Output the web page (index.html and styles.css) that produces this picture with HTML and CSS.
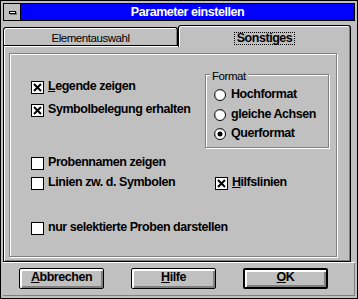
FILE: index.html
```html
<!DOCTYPE html>
<html lang="de">
<head>
<meta charset="utf-8">
<title>Parameter einstellen</title>
<link rel="stylesheet" href="styles.css">
</head>
<body>
<div class="frame">
  <div class="window">
    <div class="titlebar">
      <div class="sysmenu"><span class="sysbar"></span></div>
      <div class="caption">Parameter einstellen</div>
    </div>
    <div class="client">
      <div class="tabs">
        <div class="tab"><span>Elementauswahl</span></div>
        <div class="tab active"><span class="focus">Sonstiges</span></div>
      </div>
      <div class="tabpanel">
        <div class="pane">
          <div class="top">
            <div class="col">
              <div class="check">
                <svg class="box" width="13" height="13" viewBox="0 0 13 13"><rect x="0.5" y="0.5" width="12" height="12" fill="#fff" stroke="#000"/><path d="M3 3L10 10M10 3L3 10" stroke="#000" stroke-width="2"/></svg>
                <span class="label"><u>L</u>egende zeigen</span>
              </div>
              <div class="check">
                <svg class="box" width="13" height="13" viewBox="0 0 13 13"><rect x="0.5" y="0.5" width="12" height="12" fill="#fff" stroke="#000"/><path d="M3 3L10 10M10 3L3 10" stroke="#000" stroke-width="2"/></svg>
                <span class="label">Symbolbelegung erhalten</span>
              </div>
            </div>
            <div class="group">
              <span class="legend">Format</span>
              <div class="radio">
                <svg class="dot" width="12" height="12" viewBox="0 0 12 12"><circle cx="6" cy="6" r="5.5" fill="#fff" stroke="#000"/><path d="M2.3 8.7A4.3 4.3 0 0 1 8.7 2.3" fill="none" stroke="#808080"/></svg>
                <span class="label">Hochformat</span>
              </div>
              <div class="radio">
                <svg class="dot" width="12" height="12" viewBox="0 0 12 12"><circle cx="6" cy="6" r="5.5" fill="#fff" stroke="#000"/><path d="M2.3 8.7A4.3 4.3 0 0 1 8.7 2.3" fill="none" stroke="#808080"/></svg>
                <span class="label">gleiche Achsen</span>
              </div>
              <div class="radio">
                <svg class="dot" width="12" height="12" viewBox="0 0 12 12"><circle cx="6" cy="6" r="5.5" fill="#fff" stroke="#000"/><path d="M2.3 8.7A4.3 4.3 0 0 1 8.7 2.3" fill="none" stroke="#808080"/><circle cx="6" cy="6" r="2.5" fill="#000"/></svg>
                <span class="label">Querformat</span>
              </div>
            </div>
          </div>
          <div class="check prob">
            <svg class="box" width="13" height="13" viewBox="0 0 13 13"><rect x="0.5" y="0.5" width="12" height="12" fill="#fff" stroke="#000"/></svg>
            <span class="label">Probennamen zeigen</span>
          </div>
          <div class="pair">
            <div class="check wide">
              <svg class="box" width="13" height="13" viewBox="0 0 13 13"><rect x="0.5" y="0.5" width="12" height="12" fill="#fff" stroke="#000"/></svg>
              <span class="label">Linien zw. d. Symbolen</span>
            </div>
            <div class="check">
              <svg class="box" width="13" height="13" viewBox="0 0 13 13"><rect x="0.5" y="0.5" width="12" height="12" fill="#fff" stroke="#000"/><path d="M3 3L10 10M10 3L3 10" stroke="#000" stroke-width="2"/></svg>
              <span class="label"><u>H</u>ilfslinien</span>
            </div>
          </div>
          <div class="check nur">
            <svg class="box" width="13" height="13" viewBox="0 0 13 13"><rect x="0.5" y="0.5" width="12" height="12" fill="#fff" stroke="#000"/></svg>
            <span class="label">nur selektierte Proben darstellen</span>
          </div>
        </div>
      </div>
      <div class="buttons">
        <div class="btn"><u>A</u>bbrechen</div>
        <div class="btn"><u>H</u>ilfe</div>
        <div class="btn default"><u>O</u>K</div>
      </div>
    </div>
  </div>
</div>
</body>
</html>
```

FILE: styles.css
```css
* { box-sizing: border-box; }
html, body { margin: 0; padding: 0; }
body {
  width: 358px;
  height: 299px;
  overflow: hidden;
  background: #c0c0c0;
  color: #000;
  font-family: "Liberation Sans", Arial, sans-serif;
  font-size: 12.5px;
  font-weight: bold;
  letter-spacing: -0.45px;
}
.frame {
  width: 358px;
  height: 299px;
  border: 1px solid #000;
  padding: 2px;
  background: #c0c0c0;
}
.window {
  height: 293px;
  display: flex;
  flex-direction: column;
}
.titlebar {
  display: flex;
  height: 18px;
  border: 1px solid #000;
}
.sysmenu {
  width: 17px;
  border-right: 1px solid #000;
  background: #c0c0c0;
  display: flex;
  align-items: center;
  justify-content: center;
}
.sysbar {
  display: block;
  width: 7px;
  height: 3px;
  border: 1px solid #000;
  background: #fff;
  box-shadow: 1px 1px 0 #808080;
}
.caption {
  flex: 1;
  background: #0000ff;
  color: #fff;
  text-align: center;
  line-height: 16px;
}
.client {
  flex: 1;
  display: flex;
  flex-direction: column;
  padding-top: 4px;
}
.tabs {
  display: flex;
  align-items: flex-end;
  height: 20px;
}
.tab {
  width: 175px;
  height: 18px;
  border: 1px solid #000;
  border-bottom: none;
  border-radius: 3px 3px 0 0;
  box-shadow: inset 1px 1px 0 #fff, inset -1px 0 0 #808080;
  display: flex;
  justify-content: center;
  align-items: flex-start;
  padding-top: 3px;
  font-size: 11.5px;
  font-weight: normal;
  line-height: 14px;
}
.tab.active {
  width: 173px;
  height: 22px;
  margin-bottom: -2px;
  position: relative;
  z-index: 1;
  background: #c0c0c0;
  padding-top: 6px;
  font-size: 12.5px;
  font-weight: bold;
}
.focus {
  display: block;
  border: 1px dotted #000;
  padding: 0 2px;
  line-height: 11px;
}
.tabpanel {
  width: 348px;
  height: 217px;
  border: 1px solid #000;
  box-shadow: inset 1px 1px 0 #fff, inset -1px -1px 0 #808080;
  padding: 7px 0 0 5px;
}
.pane {
  width: 328px;
  height: 204px;
  border: 1px solid #808080;
  box-shadow: 1px 1px 0 #fff, inset 1px 1px 0 #fff;
  padding: 20px 0 0 21px;
}
.top {
  display: flex;
  align-items: flex-start;
}
.col {
  width: 174px;
  padding-top: 7px;
  display: flex;
  flex-direction: column;
  gap: 10px;
}
.check {
  display: flex;
  align-items: flex-start;
  gap: 4px;
  height: 13px;
}
.box, .dot { flex: none; display: block; }
.label {
  line-height: 11px;
  white-space: nowrap;
}
.group {
  position: relative;
  width: 124px;
  height: 74px;
  border: 1px solid #808080;
  box-shadow: 1px 1px 0 #fff, inset 1px 1px 0 #fff;
  padding: 14px 0 0 8px;
  display: flex;
  flex-direction: column;
  gap: 6.5px;
}
.legend {
  position: absolute;
  left: 4px;
  top: -4px;
  padding: 0 2px;
  background: #c0c0c0;
  font-size: 11.5px;
  font-weight: normal;
  line-height: 11px;
}
.radio {
  display: flex;
  align-items: flex-start;
  gap: 5px;
  height: 13px;
}
.prob { margin-top: 9px; }
.pair {
  display: flex;
  margin-top: 7px;
}
.wide { width: 184px; }
.nur { margin-top: 32px; }
.buttons {
  flex: 1;
  display: flex;
  gap: 27px;
  padding: 5px 0 0 16px;
  border-top: 1px solid #fff;
  box-shadow: inset -1px -1px 0 #808080;
}
.btn {
  width: 85px;
  height: 21px;
  border: 1px solid #000;
  border-radius: 2px;
  box-shadow: inset 1px 1px 0 #fff, inset 2px 2px 0 #fff, inset -1px -1px 0 #808080, inset -2px -2px 0 #808080;
  text-align: center;
  line-height: 17px;
}
.btn.default {
  border-width: 2px;
  line-height: 15px;
}
u { text-decoration: underline; text-underline-offset: 1px; }
```
